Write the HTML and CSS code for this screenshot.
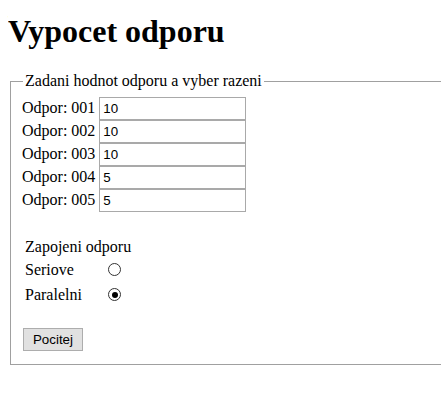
FILE: index.html
```html
<!DOCTYPE html>
<html>
<head>
<meta charset="utf-8">
<title>Vypocet odporu</title>
<link rel="stylesheet" href="styles.css">
</head>
<body>
<h1 class="title">Vypocet odporu</h1>
<form class="form">
  <fieldset class="box">
    <legend class="legend">Zadani hodnot odporu a vyber razeni</legend>
    <div class="rows">
      <div class="row"><span class="lbl">Odpor: 001</span><input class="field" type="text" value="10"></div>
      <div class="row"><span class="lbl">Odpor: 002</span><input class="field" type="text" value="10"></div>
      <div class="row"><span class="lbl">Odpor: 003</span><input class="field" type="text" value="10"></div>
      <div class="row"><span class="lbl">Odpor: 004</span><input class="field" type="text" value="5"></div>
      <div class="row"><span class="lbl">Odpor: 005</span><input class="field" type="text" value="5"></div>
    </div>
    <div class="mode">
      <div class="mode-title">Zapojeni odporu</div>
      <label class="opt"><span class="opt-name">Seriove</span><input class="radio" type="radio" name="z" value="s"></label>
      <label class="opt"><span class="opt-name">Paralelni</span><input class="radio" type="radio" name="z" value="p" checked></label>
    </div>
    <div class="actions"><button class="btn" type="button">Pocitej</button></div>
  </fieldset>
</form>
</body>
</html>
```

FILE: styles.css
```css
html {
  overflow: hidden;
}
body {
  margin: 8px 0 8px 8px;
  font-family: "Liberation Serif", "Times New Roman", serif;
  font-size: 16px;
  color: #000;
  background: #fff;
}
.title {
  font-size: 32px;
  font-weight: bold;
  margin: 5px 0 22px;
  line-height: 37px;
}
.form {
  margin: 0;
}
.box {
  margin: 0 0 0 2px;
  border: 1px solid #a0a0a0;
  border-right: none;
  padding: 5px 12px 13px 12px;
}
.legend {
  padding: 0 2px;
}
.rows {
  display: flex;
  flex-direction: column;
  margin-top: 2px;
}
.row {
  display: flex;
  align-items: baseline;
  gap: 4px;
  height: 23px;
  margin-left: -1px;
}
.lbl {
  display: block;
}
.field {
  box-sizing: border-box;
  width: 147px;
  height: 23px;
  border: 1px solid #a9a9a9;
  padding: 0 3px;
  margin: 0;
  font-family: "Liberation Sans", Arial, sans-serif;
  font-size: 13.33px;
  color: #000;
  outline: none;
}
.mode {
  display: flex;
  flex-direction: column;
  padding-left: 2px;
  margin-top: 24px;
}
.mode-title {
  height: 23px;
  padding-top: 2px;
}
.opt {
  display: flex;
  align-items: flex-start;
  height: 25px;
}
.opt-name {
  width: 83px;
}
.radio {
  appearance: none;
  -webkit-appearance: none;
  box-sizing: border-box;
  width: 13px;
  height: 13px;
  margin: 2px 0 0 0;
  border: 1px solid #333;
  border-radius: 50%;
  background: #fff;
  position: relative;
}
.radio:checked::after {
  content: "";
  position: absolute;
  left: 2.5px;
  top: 2.5px;
  width: 6px;
  height: 6px;
  border-radius: 50%;
  background: #000;
}
.actions {
  margin-top: 17px;
}
.btn {
  box-sizing: border-box;
  width: 60px;
  height: 23px;
  margin: 0;
  padding: 0;
  border: 1px solid #adadad;
  background: #e1e1e1;
  font-family: "Liberation Sans", Arial, sans-serif;
  font-size: 13.33px;
  color: #000;
}
```
